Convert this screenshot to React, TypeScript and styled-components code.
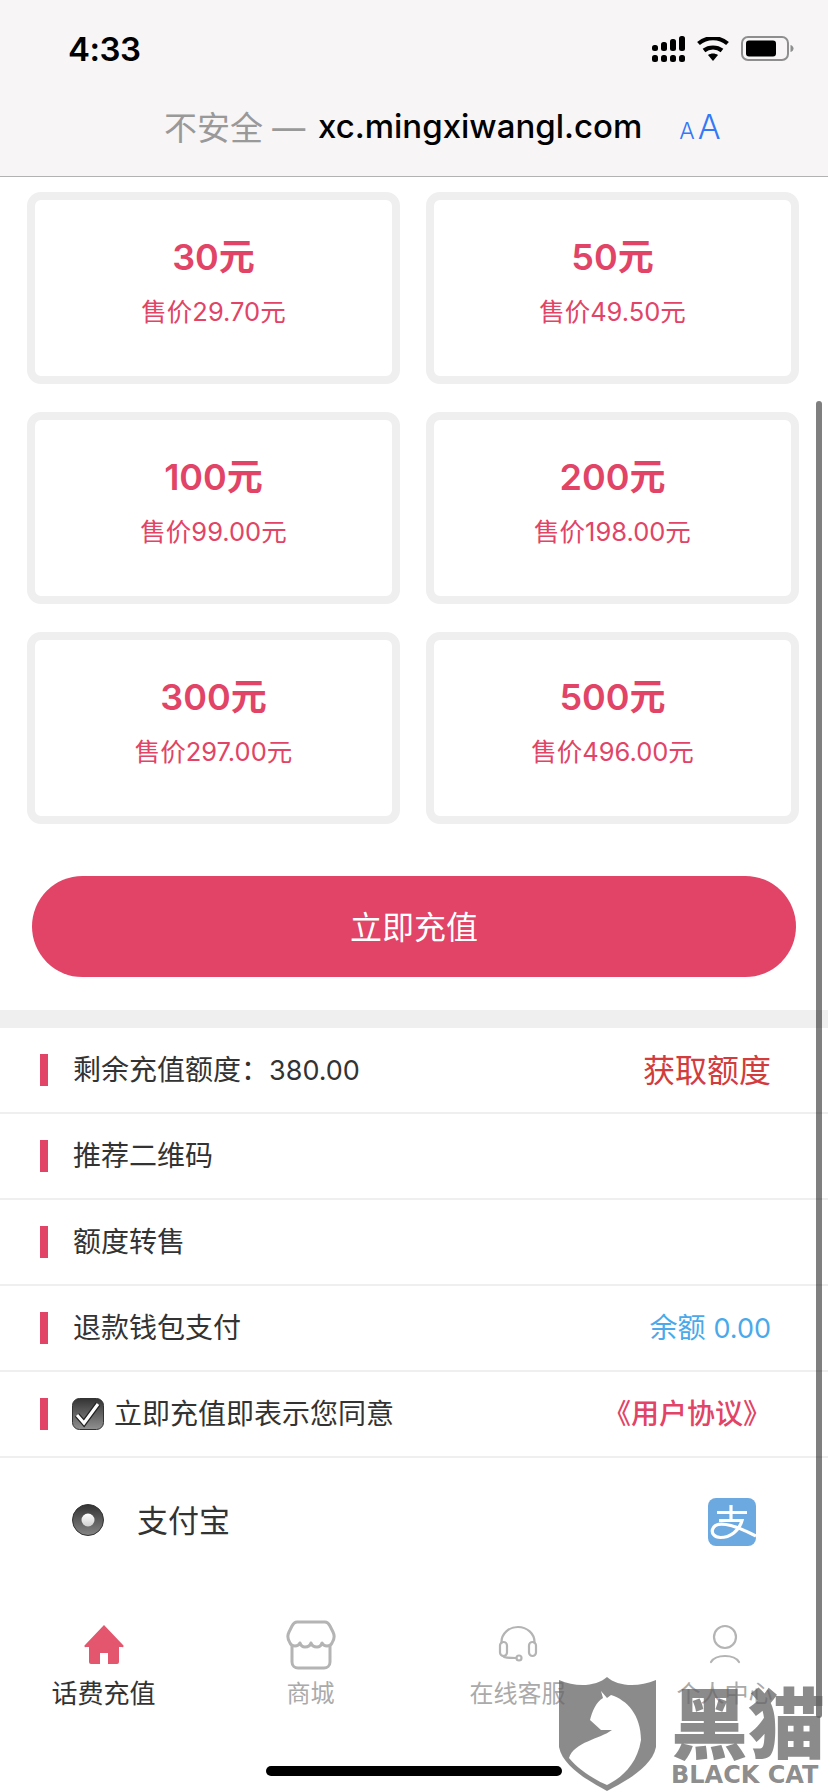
import { FC } from "react";
import styled, { createGlobalStyle } from "styled-components";

const CJK = `"Noto Sans CJK SC", sans-serif`;
const LATIN_CJK = `"Inter", "Noto Sans CJK SC", sans-serif`;
const ROSE = "#e14466";

const GlobalStyle = createGlobalStyle`
  html, body {
    margin: 0;
    background: #fff;
  }
  * {
    box-sizing: border-box;
  }
`;

const Page = styled.div`
  position: relative;
  width: 828px;
  height: 1792px;
  overflow: hidden;
  background: #fff;
  font-family: ${LATIN_CJK};
`;

// status bar + safari address bar
const Header = styled.header`
  height: 177px;
  background: #f7f5f6;
  border-bottom: 1px solid #b2b2b2;
`;

const StatusBar = styled.div`
  display: flex;
  align-items: center;
  justify-content: space-between;
  height: 98px;
  padding: 0 34px 0 68px;
`;

const Clock = styled.span`
  font-family: "Inter", sans-serif;
  font-size: 33px;
  font-weight: 600;
  color: #000;
  letter-spacing: -0.5px;
`;

const StatusIcons = styled.div`
  display: flex;
  align-items: center;
  gap: 12px;
`;

const Address = styled.div`
  display: flex;
  align-items: center;
  height: 56px;
  padding-left: 164px;
`;

const NotSecure = styled.span`
  width: 154px;
  font-family: ${LATIN_CJK};
  font-size: 33px;
  color: #999;
  white-space: nowrap;
`;

const Host = styled.span`
  font-family: "Inter", sans-serif;
  font-size: 33px;
  font-weight: 500;
  color: #000;
`;

const TextSize = styled.span`
  margin-left: 37px;
  font-family: "Inter", sans-serif;
  font-weight: 300;
  color: #3478f6;
  font-size: 34px;
  small {
    font-size: 23px;
    margin-right: 3px;
  }
`;

const Cards = styled.div`
  display: grid;
  grid-template-columns: 373px 373px;
  column-gap: 26px;
  row-gap: 28px;
  padding: 15px 0 0 27px;
`;

const Card = styled.div`
  display: flex;
  flex-direction: column;
  align-items: center;
  height: 192px;
  padding-top: 31px;
  border: 8px solid #efefef;
  border-radius: 14px;
  color: ${ROSE};
`;

const Amount = styled.div`
  font-size: 36px;
  font-weight: 600;
  line-height: 52px;
`;

const Price = styled.div`
  margin-top: 9px;
  font-size: 25.5px;
  line-height: 40px;
`;

const RechargeButton = styled.button`
  display: block;
  width: 764px;
  height: 101px;
  margin: 52px 0 33px 32px;
  padding: 0 0 3px;
  border: 0;
  border-radius: 51px;
  background: ${ROSE};
  color: #fff;
  font-family: ${CJK};
  font-size: 32px;
`;

const Band = styled.div`
  height: 18px;
  background: #efefef;
`;

const Row = styled.div`
  display: flex;
  align-items: center;
  height: 86px;
  padding: 0 57px 0 40px;
  border-bottom: 2px solid #efefef;
  font-size: 28px;
  color: #333;
`;

const Marker = styled.i`
  flex: none;
  width: 8px;
  height: 32px;
  margin-right: 25px;
  background: ${ROSE};
`;

const RowLabel = styled.span`
  flex: 1;
  display: flex;
  align-items: center;
`;

const RowText = styled.span`
  margin-bottom: 4px;
`;

const Figure = styled.span`
  font-size: 27px;
`;

const RowAction = styled.span<{ $color: string; $size?: number; $bold?: boolean }>`
  margin-bottom: 4px;
  color: ${(p) => p.$color};
  font-size: ${(p) => p.$size ?? 28}px;
  font-weight: ${(p) => (p.$bold ? 500 : 400)};
`;

const Check = styled.svg`
  flex: none;
  width: 32px;
  height: 32px;
  margin: 0 10px 0 -1px;
`;

const PayRow = styled.div`
  display: flex;
  align-items: center;
  height: 124px;
  padding: 0 72px;
  font-size: 32px;
  color: #333;
`;

const PayName = styled.span`
  flex: 1;
  margin: 0 0 4px 33px;
  font-size: 31px;
`;

const AlipayMark = styled.svg`
  width: 48px;
  height: 48px;
  margin-top: 4px;
`;

const TabBar = styled.nav`
  display: grid;
  grid-template-columns: repeat(4, 207px);
  padding: 38px 0 0;
`;

const Tab = styled.div<{ $active?: boolean }>`
  display: flex;
  flex-direction: column;
  align-items: center;
  color: ${(p) => (p.$active ? "#333" : "#aaa")};
  font-size: ${(p) => (p.$active ? 26 : 24)}px;
  line-height: 36px;
`;

const TabIcon = styled.svg<{ $stroke?: number }>`
  display: block;
  width: 50px;
  height: 50px;
  margin-bottom: 6px;
  fill: none;
  stroke: #b4b4b4;
  stroke-width: ${(p) => p.$stroke ?? 2};
  stroke-linecap: round;
  stroke-linejoin: round;
`;

const HomeBar = styled.div`
  position: absolute;
  left: 266px;
  top: 1766px;
  width: 296px;
  height: 10px;
  border-radius: 5px;
  background: #000;
`;

const ScrollThumb = styled.div`
  position: absolute;
  left: 816px;
  top: 401px;
  width: 6px;
  height: 1317px;
  border-radius: 3px;
  background: rgba(0, 0, 0, 0.5);
`;

const Watermark = styled.div`
  position: absolute;
  left: 559px;
  top: 1677px;
  display: flex;
  gap: 15px;
  color: rgba(100, 98, 100, 0.74);
`;

const Shield = styled.svg`
  flex: none;
  width: 97px;
  height: 115px;
`;

const MarkText = styled.div`
  display: flex;
  flex-direction: column;
  align-items: flex-start;
`;

const MarkCn = styled.span`
  font-family: ${CJK};
  font-size: 77px;
  font-weight: 900;
  line-height: 86px;
`;

const MarkEn = styled.span`
  font-family: "DejaVu Sans", sans-serif;
  font-size: 24px;
  font-weight: 700;
  line-height: 24px;
  white-space: nowrap;
`;

const cards = [
  ["30元", "售价29.70元"],
  ["50元", "售价49.50元"],
  ["100元", "售价99.00元"],
  ["200元", "售价198.00元"],
  ["300元", "售价297.00元"],
  ["500元", "售价496.00元"],
];

const Signal: FC = () => (
  <svg width="33" height="26" viewBox="0 0 33 26">
    <g fill="#000">
      <rect x="0" y="9" width="6" height="6" rx="2.5" />
      <rect x="9" y="6" width="6" height="9" rx="2.5" />
      <rect x="18" y="3" width="6" height="12" rx="2.5" />
      <rect x="27" y="0" width="6" height="15" rx="2.5" />
      <rect x="0" y="19" width="6" height="7" rx="2.5" />
      <rect x="9" y="19" width="6" height="7" rx="2.5" />
      <rect x="18" y="19" width="6" height="7" rx="2.5" />
      <rect x="27" y="19" width="6" height="7" rx="2.5" />
    </g>
  </svg>
);

const Wifi: FC = () => (
  <svg width="32" height="24" viewBox="0 0 32 24">
    <path d="M16 24l-5-6c3-2 7-2 10 0z" fill="#000" />
    <path d="M7 13.5c5-4 13-4 18 0M1.5 6.500c8-7 21-7 29 0" fill="none" stroke="#000" strokeWidth="4.200" />
  </svg>
);

const Battery: FC = () => (
  <svg width="53" height="26" viewBox="0 0 53 26">
    <rect x="1" y="1" width="46" height="23" rx="6" fill="none" stroke="#8e8e8e" strokeWidth="2" />
    <rect x="5" y="4.500" width="30" height="16" rx="3" fill="#000" />
    <path d="M49.500 9c2 .5 3 2 3 3.500s-1 3-3 3.500z" fill="#8e8e8e" />
  </svg>
);

const Alipay: FC = () => (
  <AlipayMark viewBox="0 0 48 48">
    <rect width="48" height="48" rx="8" fill="#6ca9e0" />
    <path
      d="M9 14.500h30M23 7v15M11 22.500h23C31 33 22 39.500 12.500 39.500 6 39.500 3.500 35 4.500 31.500 6 26.500 12 25.500 18 26.500 28 28 38 33 48 38"
      fill="none"
      stroke="#fff"
      strokeWidth="3.200"
    />
  </AlipayMark>
);

const App: FC = () => (
  <Page>
    <GlobalStyle />
    <Header>
      <StatusBar>
        <Clock>4:33</Clock>
        <StatusIcons>
          <Signal />
          <Wifi />
          <Battery />
        </StatusIcons>
      </StatusBar>
      <Address>
        <NotSecure>不安全 —</NotSecure>
        <Host>xc.mingxiwangl.com</Host>
        <TextSize>
          <small>A</small>A
        </TextSize>
      </Address>
    </Header>

    <Cards>
      {cards.map(([amount, price]) => (
        <Card key={amount}>
          <Amount>{amount}</Amount>
          <Price>{price}</Price>
        </Card>
      ))}
    </Cards>

    <RechargeButton>立即充值</RechargeButton>
    <Band />

    <Row>
      <Marker />
      <RowLabel>
        <RowText>
          剩余充值额度：<Figure>380.00</Figure>
        </RowText>
      </RowLabel>
      <RowAction $color="#d23c3c" $size={32}>获取额度</RowAction>
    </Row>
    <Row>
      <Marker />
      <RowLabel>
        <RowText>推荐二维码</RowText>
      </RowLabel>
    </Row>
    <Row>
      <Marker />
      <RowLabel>
        <RowText>额度转售</RowText>
      </RowLabel>
    </Row>
    <Row>
      <Marker />
      <RowLabel>
        <RowText>退款钱包支付</RowText>
      </RowLabel>
      <RowAction $color="#4aa9ea">
        余额 <Figure>0.00</Figure>
      </RowAction>
    </Row>
    <Row>
      <Marker />
      <RowLabel>
        <Check viewBox="0 0 32 32">
          <defs>
            <linearGradient id="boxFill" x1="0" y1="0" x2="0" y2="1">
              <stop offset="0" stopColor="#333" />
              <stop offset="1" stopColor="#919191" />
            </linearGradient>
          </defs>
          <rect x="0.500" y="0.500" width="31" height="31" rx="7" fill="url(#boxFill)" stroke="#333" />
          <path d="M5 17l7 8L26 6" fill="none" stroke="#222" strokeWidth="5.500" />
          <path d="M5 17l7 8L26 6" fill="none" stroke="#fff" strokeWidth="3" />
        </Check>
        <RowText>立即充值即表示您同意</RowText>
      </RowLabel>
      <RowAction $color={ROSE} $bold>《用户协议》</RowAction>
    </Row>

    <PayRow>
      <svg width="32" height="32" viewBox="0 0 32 32">
        <defs>
          <linearGradient id="radioFill" x1="0" y1="0" x2="0" y2="1">
            <stop offset="0" stopColor="#333" />
            <stop offset="1" stopColor="#858585" />
          </linearGradient>
          <linearGradient id="radioDot" x1="0" y1="0" x2="0" y2="1">
            <stop offset="0" stopColor="#fff" />
            <stop offset="1" stopColor="#cfcfcf" />
          </linearGradient>
        </defs>
        <circle cx="16" cy="16" r="15.500" fill="url(#radioFill)" stroke="#333" />
        <circle cx="16" cy="16" r="6.500" fill="url(#radioDot)" />
      </svg>
      <PayName>支付宝</PayName>
      <Alipay />
    </PayRow>

    <TabBar>
      <Tab $active>
        <TabIcon viewBox="0 0 50 50">
          <path
            d="M25 5L6 25a1 1 0 0 0 1 2h3v15a2 2 0 0 0 2 2h9V33h8v11h9a2 2 0 0 0 2-2V27h3a1 1 0 0 0 1-2z"
            fill="#e4566d"
            stroke="none"
          />
        </TabIcon>
        话费充值
      </Tab>
      <Tab>
        <TabIcon viewBox="0 0 50 50" $stroke={3}>
          <path d="M11 2h28c3 0 4 2 5 4l3 6c2 4 1 8-1 11-1 2-3 3-5 3-2 0-4-1-5-3-1 3-3 4-5 4s-5-1-6-4c-1 3-4 4-6 4s-4-1-5-4c-1 2-3 3-5 3s-4-1-5-3c-2-3-3-7-1-11l3-6c1-2 2-4 5-4z" />
          <path d="M6 26v16c0 4 3 6 6 6h26c3 0 6-2 6-6V26" />
        </TabIcon>
        商城
      </Tab>
      <Tab>
        <TabIcon viewBox="0 0 50 50" $stroke={2.200}>
          <path d="M8.500 23v-1a16.500 15 0 0 1 33 0v1" />
          <rect x="7" y="22" width="7" height="14" rx="3.500" />
          <rect x="36" y="22" width="7" height="14" rx="3.500" />
          <path d="M10 36c1 2 5 2 13 2" />
          <circle cx="26" cy="38" r="2.500" />
        </TabIcon>
        在线客服
      </Tab>
      <Tab>
        <TabIcon viewBox="0 0 50 50" $stroke={2.200}>
          <circle cx="25" cy="17" r="11" />
          <path d="M11 42c5-8 23-8 28 0" />
        </TabIcon>
        个人中心
      </Tab>
    </TabBar>

    <HomeBar />
    <ScrollThumb />
    <Watermark>
      <Shield viewBox="0 0 97 115">
        <path
          fillRule="evenodd"
          fill="currentColor"
          d="M0 3c18 8 38 6 48-3 10 9 30 11 49 3v67c-4 20-30 34-49 44C30 104 4 90 0 70z
             M42 14l2 7c-7 4-11 14-13 22l11 10h11c-12 9-38 12-43 28 10 12 26 22 38 27 14-7 30-20 34-45 0-25-14-40-30-45l-4 3z"
        />
      </Shield>
      <MarkText>
        <MarkCn>黑猫</MarkCn>
        <MarkEn>BLACK CAT</MarkEn>
      </MarkText>
    </Watermark>
  </Page>
);

export default App;
